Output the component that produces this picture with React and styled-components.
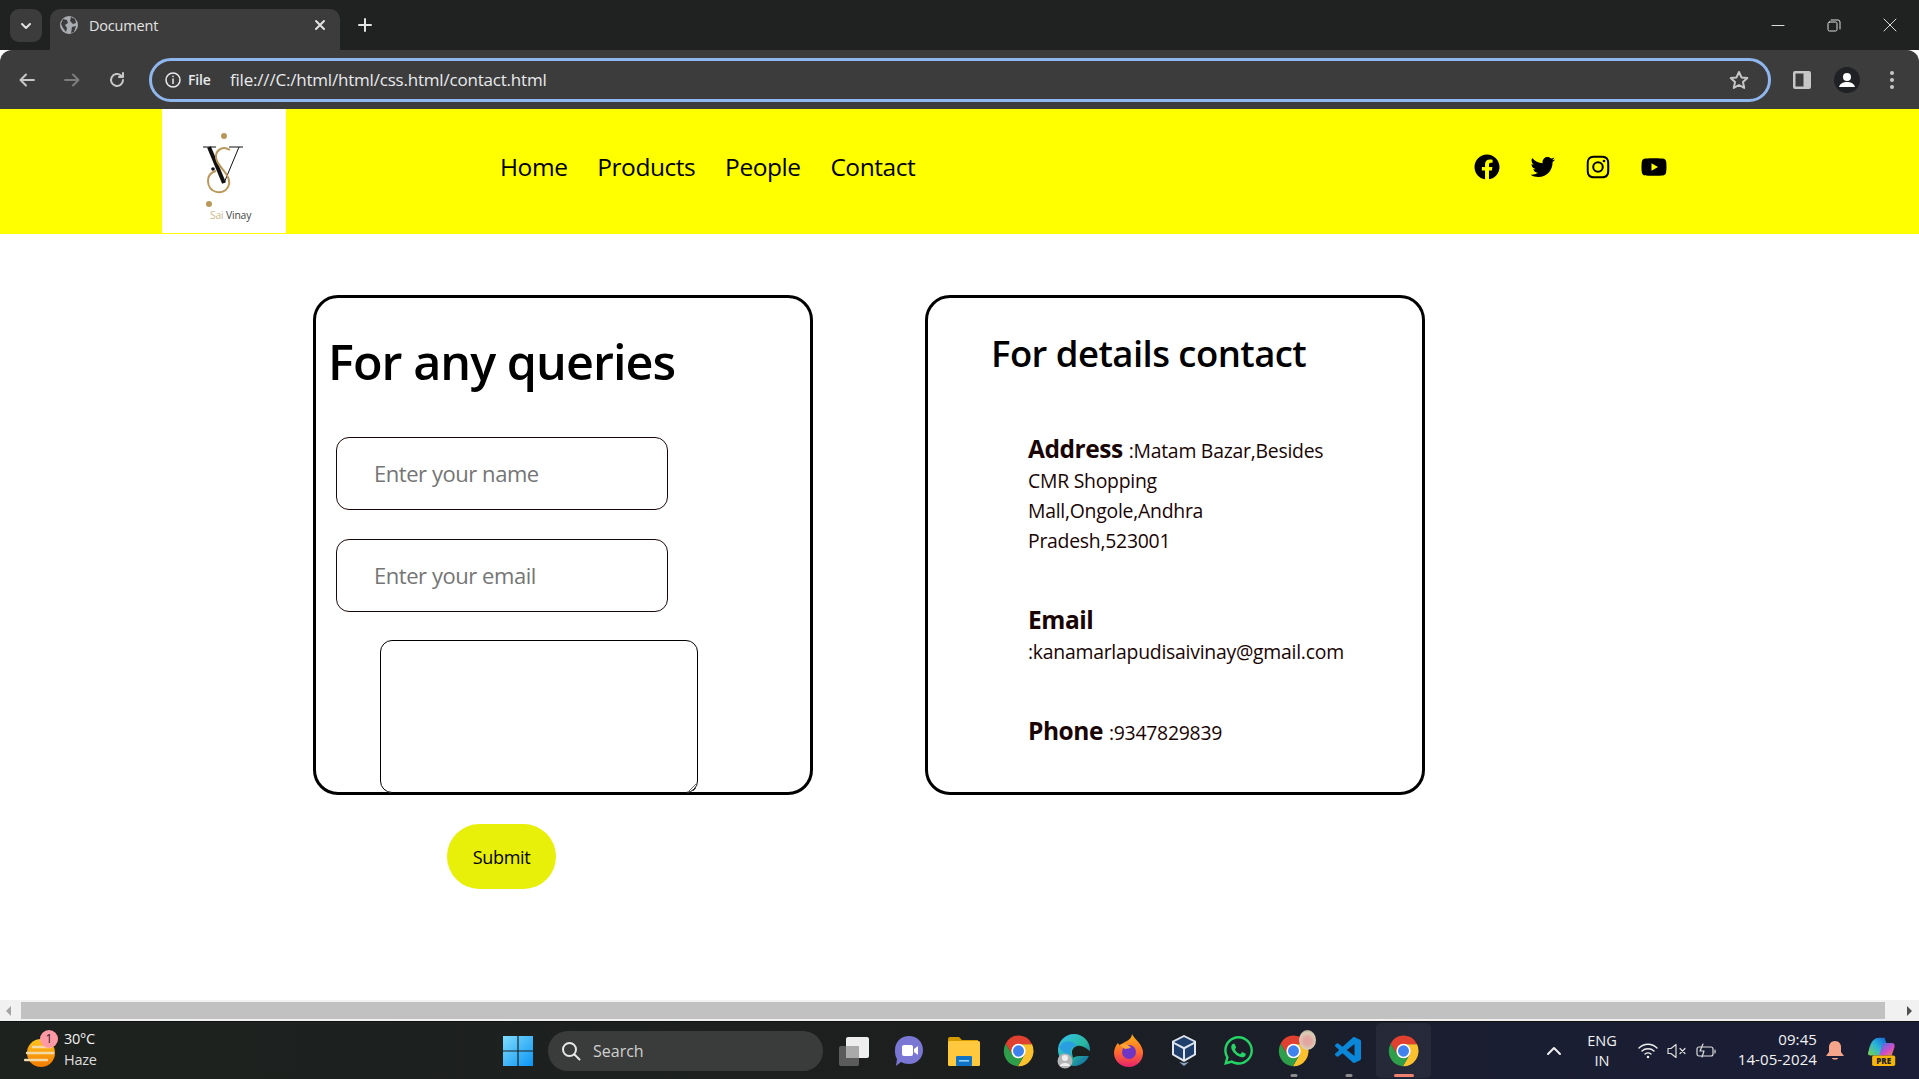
import React from "react";
import styled, { createGlobalStyle } from "styled-components";
import { BiLogoFacebookCircle, BiLogoTwitter, BiLogoInstagram, BiLogoYoutube } from "react-icons/bi";
import { FaWhatsapp } from "react-icons/fa";
import { VscVscode } from "react-icons/vsc";

const Global = createGlobalStyle`
  html, body { margin: 0; padding: 0; background: #fff; overflow: hidden; }
  * { box-sizing: border-box; }
  body { font-family: "Open Sans", "Noto Sans", sans-serif; }
`;
const Screen = styled.div`width: 1919px; height: 1079px; display: flex; flex-direction: column; overflow: hidden;`;

/* browser chrome */
const TabStrip = styled.div`height: 50px; flex: none; background: #202221; display: flex; align-items: flex-end; padding-left: 10px; color: #e3e3e3; font-size: 14.5px;`;
const TabMenu = styled.div`width: 32px; height: 33px; margin: 0 8px 8px 0; border-radius: 9px; background: #3c3c3c; display: flex; align-items: center; justify-content: center;`;
const Tab = styled.div`width: 290px; height: 41px; background: #3c3c3c; border-radius: 10px 10px 0 0; display: flex; align-items: center; padding: 0 13px 9px 10px;`;
const TabTitle = styled.span`flex: 1; margin-left: 11px; letter-spacing: -.2px;`;
const NewTab = styled.div`width: 50px; height: 41px; display: flex; align-items: center; justify-content: center; padding-bottom: 9px;`;
const WinControls = styled.div`margin-left: auto; height: 50px; display: flex; align-items: center; padding: 0 1px 0 0;`;
const WinBtn = styled.div`width: 56px; height: 50px; display: flex; align-items: center; justify-content: center;`;
const Toolbar = styled.div`height: 59px; flex: none; background: #3c3c3c; display: flex; align-items: center; padding-left: 9px; border-radius: 12px 12px 0 0;`;
const NavBtn = styled.div`width: 36px; height: 36px; margin-right: ${p => p.$mr || 9}px; display: flex; align-items: center; justify-content: center;`;
const Omnibox = styled.div`width: 1622px; height: 44px; margin-left: 9px; border: 3px solid #8fb7ee; border-radius: 22px; display: flex; align-items: center; padding: 0 18px 0 12px; color: #e8eaed;`;
const Origin = styled.span`font-size: 14px; font-weight: 600; margin-left: 6px; width: 42px; letter-spacing: -.2px;`;
const Url = styled.span`flex: 1; font-size: 17px; letter-spacing: -.2px;`;
const ToolRight = styled.div`display: flex; align-items: center; margin-left: 13px;`;
const ToolBtn = styled.div`width: 36px; height: 36px; margin-right: ${p => p.$mr ?? 9}px; display: flex; align-items: center; justify-content: center;`;

/* page */
const Page = styled.div`flex: 1; min-height: 0; background: #fff; display: flex; flex-direction: column;`;
const Header = styled.header`height: 125px; flex: none; background: #ff0; display: flex; padding-left: 162px;`;
const Logo = styled.div`width: 124px; height: 124px; background: #fff; display: flex; align-items: center; justify-content: center;`;
const Nav = styled.nav`display: flex; gap: 29.8px; margin-left: 214px; padding-top: 41px;`;
const NavLink = styled.a`font-size: 24.5px; line-height: 34px; color: #000; letter-spacing: -.45px;`;
const Social = styled.div`display: flex; gap: 25.5px; margin-left: 557px; padding-top: 43px; color: #000; font-size: 30px; height: fit-content;`;
const Main = styled.main`display: flex; gap: 112px; padding: 61px 0 0 313px;`;
const Column = styled.div`display: flex; flex-direction: column;`;
const Card = styled.section`width: 500px; height: 500px; border: 3px solid #000; border-radius: 25px; position: relative;`;
const QueryTitle = styled.h1`margin: 29px 0 0 12px; font-size: 48.5px; line-height: 68px; font-weight: 600; letter-spacing: -.95px; color: #000;`;
const Field = styled.input`display: block; width: 332px; height: 73px; margin: ${p => p.$top}px 0 0 20px; padding: 0 0 2px 37px; border: 1px solid #1a0808; border-radius: 13px; background: #fff; font: 22px "Open Sans", sans-serif; letter-spacing: -.45px; outline: 0; &::placeholder { color: #757575; opacity: 1; }`;
const Message = styled.textarea`display: block; width: 318px; height: 153px; margin: 28px 0 0 64px; border: 1px solid #000; border-radius: 12px; background: #fff; outline: 0;`;
const Submit = styled.button`width: 109px; height: 65px; margin: 29px 0 0 134px; border: 0; border-radius: 33px; background: #e8ef08; color: #000; font: 18px "Open Sans", sans-serif; letter-spacing: -.3px;`;
const DetailTitle = styled.h2`margin: 29px 0 0 63px; font-size: 36.5px; line-height: 52px; font-weight: 600; letter-spacing: -.55px; color: #000;`;
const Info = styled.p`margin: ${p => p.$top}px 0 0 100px; font-size: 19.4px; line-height: 30px; color: #1a0505; letter-spacing: -.25px; white-space: nowrap;`;
const Label = styled.b`font-size: 24.5px; line-height: 35px; font-weight: 700; letter-spacing: -.45px; white-space: pre;`;

/* scrollbar */
const Scrollbar = styled.div`height: 21px; flex: none; background: #f1f1f1; display: flex; align-items: flex-start; padding-top: 2px;`;
const ArrowBox = styled.div`width: ${p => p.$w}px; height: 17px; display: flex; align-items: center; padding-left: ${p => p.$pad}px;`;
const Arrow = styled.div`width: 0; height: 0; border-top: 5px solid transparent; border-bottom: 5px solid transparent; ${p => p.$right ? "border-left: 5px solid #505050;" : "border-right: 5px solid #a3a3a3;"}`;
const Thumb = styled.div`width: 1864px; height: 17px; background: #c1c1c1;`;

/* taskbar */
const Taskbar = styled.footer`height: 58px; flex: none; background: linear-gradient(90deg, #1e221f 0%, #1c1f1e 50%, #1a1e33 80%, #1a1d35 100%); color: #f2f2f2; display: flex; align-items: center; position: relative; border-top: 1px solid #111;`;
const Weather = styled.div`width: 490px; display: flex; align-items: center; padding-left: 24px;`;
const WeatherIcon = styled.div`position: relative; width: 36px; height: 42px; margin-right: 4px;`;
const Badge = styled.span`position: absolute; left: 16px; top: 0; width: 18px; height: 18px; border-radius: 50%; background: #ff9aa5; color: #222; font-size: 12px; line-height: 18px; text-align: center;`;
const WeatherText = styled.div`font-size: 14.5px; line-height: 21px; letter-spacing: -.3px; margin-top: -3px;`;
const Dim = styled.div`color: #ddd;`;
const Item = styled.div`position: relative; width: 55px; height: 55px; display: flex; align-items: center; justify-content: center; border-radius: 5px; background: ${p => p.$active ? "rgba(255,255,255,.05)" : "transparent"};`;
const Mark = styled.i`position: absolute; bottom: 1px; left: 50%; transform: translateX(-50%); height: 3px; width: ${p => p.$active ? 20 : 7}px; border-radius: 2px; background: ${p => p.$active ? "#f0806f" : "#8b8b8b"};`;
const Blob = styled.i`position: absolute; right: 5px; top: 7px; width: 17px; height: 20px; border-radius: 50%; background: radial-gradient(circle at 50% 55%, #e3a6a0 0 25%, #d9cdb8 60%, #8c8470 100%);`;
const SearchBox = styled.div`width: 275px; height: 40px; margin: 0 3px; border-radius: 20px; background: #3a3c3c; display: flex; align-items: center; padding-left: 13px; font-size: 16px; color: #d0d0d0; gap: 12px;`;
const Tray = styled.div`position: absolute; right: 0; top: 0; bottom: 0; display: flex; align-items: center;`;
const TrayChevron = styled.div`margin-right: 13px; display: flex;`;
const Lang = styled.div`width: 54px; text-align: center; font-size: 14.5px; line-height: 20px; margin-right: 9px;`;
const TrayIcons = styled.div`display: flex; align-items: center; gap: 9px; margin-right: 11px;`;
const Clock = styled.div`text-align: right; font-size: 15px; line-height: 20px; width: 90px; letter-spacing: .1px; margin-top: -4px;`;
const Bell = styled.div`margin: 0 21px 0 9px; display: flex;`;
const Copilot = styled.div`margin-right: 22px; display: flex;`;

const GlobeIcon = () => (
  <svg width="18" height="18" viewBox="0 0 18 18"><circle cx="9" cy="9" r="9" fill="#a9acb0"/><path d="M3 3l4 1 1 3-3 2 2 3-1 4-3-4-2-4zM11 1l4 2 1 4-3 1-3-3zM12 11l4-1-2 6-3 1z" fill="#3c3c3c"/></svg>
);
const ChromeIcon = () => (
  <svg width="31" height="36" viewBox="0 0 48 54" preserveAspectRatio="none">
    <g transform="translate(0 3)">
      <path d="M24 14H45A23 23 0 0 0 4 13L15 30Z" fill="#e0402f"/>
      <path d="M45 14A23 23 0 0 1 23 47L33 30 33 22 24 14Z" fill="#fbc02d"/>
      <path d="M4 13A23 23 0 0 0 23 47L33 30H15Z" fill="#2f9e4b"/>
      <circle cx="24" cy="24" r="11" fill="#fff"/>
      <circle cx="24" cy="24" r="8.5" fill="#3f82ee"/>
    </g>
  </svg>
);
const logoGold = "#b9975b";
const LogoMark = () => (
  <svg width="124" height="124" viewBox="0 0 124 124">
    <circle cx="62" cy="27" r="3" fill={logoGold}/>
    <path d="M41 38h13M67 38h14" stroke="#111" strokeWidth="1"/>
    <path d="M62 74L77 38" fill="none" stroke="#111" strokeWidth="1"/>
    <path d="M47 38L62 74" stroke="#111" strokeWidth="4"/>
    <path d="M68 41C60 36 51 42 55 52 59 61 71 68 66 78 61 87 46 84 46 72 46 66 50 63 54 62" fill="none" stroke={logoGold} strokeWidth="2"/>
    <circle cx="51" cy="60" r="1.8" fill="#111"/>
    <circle cx="47" cy="95" r="3" fill={logoGold}/>
    <text x="48" y="110" fontFamily="Open Sans, sans-serif" fontSize="10.4" letterSpacing="-.2" fill="#cdb98d">Sai <tspan fill="#444">Vinay</tspan></text>
  </svg>
);

const Windows = () => (
  <svg width="30" height="30" viewBox="0 0 30 30">
    <defs><linearGradient id="w" x1="0" y1="0" x2="1" y2="1"><stop offset="0" stopColor="#7fdcfb"/><stop offset="1" stopColor="#0a94f5"/></linearGradient></defs>
    <path d="M0 0h14.400v14.400H0zM15.600 0H30v14.400H15.600zM0 15.600h14.400V30H0zM15.600 15.600H30V30H15.600z" fill="url(#w)"/>
  </svg>
);
const TaskView = () => (
  <svg width="30" height="30" viewBox="0 0 30 30"><rect x="0" y="10" width="20" height="20" rx="2" fill="#5b5b5b"/><rect x="7" y="1" width="23" height="21" rx="2" fill="#eee"/><rect x="7" y="10" width="13" height="12" fill="#aaa"/></svg>
);
const Meet = () => (
  <svg width="30" height="34" viewBox="0 0 30 34"><path d="M15 2c8 0 14 6 14 14s-6 14-14 14c-3 0-6-1-8-2l-5 4 1-7C1 22 1 19 1 16 1 8 7 2 15 2z" fill="#7a76d4"/><rect x="8" y="11" width="11" height="11" rx="2" fill="#fff"/><path d="M20 15l4-3v9l-4-3z" fill="#fff"/></svg>
);
const Folder = () => (
  <svg width="32" height="30" viewBox="0 0 32 30"><path d="M0 3a2 2 0 0 1 2-2h9l3 3h16v6H0z" fill="#d49a00"/><rect y="5" width="32" height="25" rx="1.5" fill="#ffc83d"/><rect x="8" y="20" width="16" height="10" rx="1" fill="#1173c5"/><rect x="11" y="24" width="10" height="1.6" fill="#8fd0ff"/></svg>
);
const Edge = () => (
  <svg width="34" height="36" viewBox="0 0 34 36">
    <defs><linearGradient id="e" x1="0" y1="0" x2="1" y2="1"><stop offset="0" stopColor="#35c1f1"/><stop offset=".55" stopColor="#2ab8a0"/><stop offset="1" stopColor="#0c59a4"/></linearGradient></defs>
    <circle cx="17" cy="17" r="16" fill="url(#e)"/>
    <path d="M20 13c5-1 9 2 14 6l-1 4H22c-3 0-5 1-6 2l-1-5c0-4 2-6 5-7z" fill="#1b1f1e"/>
    <path d="M2 14c4-7 14-7 18-1-5 0-8 4-6 10-4 0-9-4-12-9z" fill="#2a9fe0"/>
    <circle cx="8" cy="28" r="7.500" fill="#b5b5b5"/><circle cx="8" cy="25" r="3" fill="#eee"/><path d="M3 33c0-4 10-4 10 0z" fill="#eee"/>
  </svg>
);
const Firefox = () => (
  <svg width="30" height="36" viewBox="0 0 30 36">
    <defs><linearGradient id="f" x1="0" y1="0" x2="0" y2="1"><stop offset="0" stopColor="#ffb516"/><stop offset=".55" stopColor="#ff6a2d"/><stop offset="1" stopColor="#e8226d"/></linearGradient></defs>
    <path d="M18 1c2 5 9 8 11 17 1 9-6 16-14 16S0 28 0 20c0-4 2-8 4-10l2 3c2-3 5-4 7-5 3-2 5-4 5-7z" fill="url(#f)"/>
    <circle cx="15" cy="19" r="7" fill="#6f36c6"/><path d="M5 12c4-2 9-1 12 3l-6 1z" fill="#ffa436"/>
  </svg>
);
const VBox = () => (
  <svg width="26" height="34" viewBox="0 0 26 34"><path d="M13 1l12 6v14l-12 7L1 21V7z" fill="#dfe6ef"/><path d="M13 3l10 5-10 5L3 8z" fill="#1f3e6b"/><path d="M3 10l9 5v10l-9-5zM23 10l-9 5v10l9-5z" fill="#1f3e6b"/><path d="M8 28l5 4 5-4-5 1z" fill="#8fa2c0"/></svg>
);
const Copi = () => (
  <svg width="32" height="34" viewBox="0 0 36 36">
    <defs><linearGradient id="c1" x1="0" y1="1" x2="1" y2="0"><stop offset="0" stopColor="#7fd04a"/><stop offset=".5" stopColor="#29b6d8"/><stop offset="1" stopColor="#1560d8"/></linearGradient><linearGradient id="c2" x1="0" y1="0" x2="1" y2="1"><stop offset="0" stopColor="#2f7ae8"/><stop offset=".6" stopColor="#d44bc8"/><stop offset="1" stopColor="#f09040"/></linearGradient></defs>
    <path d="M4 18C6 8 10 3 16 3h6l2 6-6 14H6C3 23 3 21 4 18z" fill="url(#c1)"/>
    <path d="M20 9h10c3 0 4 2 3 5l-3 9h-14z" fill="url(#c2)"/>
    <rect x="8" y="23" width="26" height="12" rx="2" fill="#f5b50a"/>
    <text x="21" y="32.500" textAnchor="middle" fontFamily="Open Sans, sans-serif" fontSize="9" fontWeight="800" fill="#222">PRE</text>
  </svg>
);
const Line = ({ w = 18, h = 18, children, c = "#dcdcdc", sw = 2 }) => (
  <svg width={w} height={h} viewBox={`0 0 ${w} ${h}`} fill="none" stroke={c} strokeWidth={sw} strokeLinecap="round" strokeLinejoin="round">{children}</svg>
);

export default function App() {
  return (
    <Screen>
      <Global />
      <TabStrip>
        <TabMenu><Line w={14} h={14} c="#e3e3e3"><path d="M3 5l4 4 4-4"/></Line></TabMenu>
        <Tab>
          <GlobeIcon />
          <TabTitle>Document</TabTitle>
          <Line w={14} h={14} c="#e3e3e3"><path d="M3 3l8 8M11 3l-8 8"/></Line>
        </Tab>
        <NewTab><Line w={16} h={16} c="#e3e3e3"><path d="M8 2v12M2 8h12"/></Line></NewTab>
        <WinControls>
          <WinBtn><Line w={14} h={14} sw={1}><path d="M1 7.500h12"/></Line></WinBtn>
          <WinBtn><Line w={14} h={14} sw={1}><rect x="1" y="4" width="9" height="9" rx="1.500"/><path d="M4 2h7a2 2 0 0 1 2 2v7"/></Line></WinBtn>
          <WinBtn><Line w={14} h={14} sw={1}><path d="M1 1l12 12M13 1L1 13"/></Line></WinBtn>
        </WinControls>
      </TabStrip>
      <Toolbar>
        <NavBtn><Line w={18} h={18} c="#c8c8c8"><path d="M16 9H3M8 3.500L2.500 9 8 14.500"/></Line></NavBtn>
        <NavBtn><Line w={18} h={18} c="#7d7d7d"><path d="M2 9h13M10 3.500L15.500 9 10 14.500"/></Line></NavBtn>
        <NavBtn $mr={5}><Line w={18} h={18} c="#c8c8c8"><path d="M15 9a6 6 0 1 1-2-4.500L15 6M15 2v4h-4"/></Line></NavBtn>
        <Omnibox>
          <Line w={18} h={18} c="#e8eaed" sw={1.5}><circle cx="9" cy="9" r="7"/><path d="M9 8v4.500M9 5.200v.3"/></Line>
          <Origin>File</Origin>
          <Url>file:///C:/html/html/css.html/contact.html</Url>
          <Line w={22} h={22} c="#c7c7c7"><path d="M11 3l2.500 5.400 5.800.7-4.300 4 1.200 5.800-5.200-2.900-5.200 2.900 1.200-5.800-4.300-4 5.800-.7z"/></Line>
        </Omnibox>
        <ToolRight>
          <ToolBtn><svg width="18" height="18" viewBox="0 0 18 18"><rect width="18" height="18" rx="2" fill="#c7c7c7"/><rect x="2.500" y="2.500" width="8" height="13" fill="#3c3c3c"/></svg></ToolBtn>
          <ToolBtn><svg width="26" height="26" viewBox="0 0 26 26"><circle cx="13" cy="13" r="13" fill="#202124"/><circle cx="13" cy="10" r="4" fill="#fff"/><path d="M5 20c1-4 5-5 8-5s7 1 8 5z" fill="#fff"/></svg></ToolBtn>
          <ToolBtn $mr={0}><svg width="4" height="18" viewBox="0 0 4 18"><circle cx="2" cy="2" r="2" fill="#c7c7c7"/><circle cx="2" cy="9" r="2" fill="#c7c7c7"/><circle cx="2" cy="16" r="2" fill="#c7c7c7"/></svg></ToolBtn>
        </ToolRight>
      </Toolbar>

      <Page>
        <Header>
          <Logo><LogoMark /></Logo>
          <Nav>
            <NavLink>Home</NavLink>
            <NavLink>Products</NavLink>
            <NavLink>People</NavLink>
            <NavLink>Contact</NavLink>
          </Nav>
          <Social>
            <BiLogoFacebookCircle />
            <BiLogoTwitter />
            <BiLogoInstagram />
            <BiLogoYoutube />
          </Social>
        </Header>
        <Main>
          <Column>
            <Card>
              <QueryTitle>For any queries</QueryTitle>
              <Field $top={42} placeholder="Enter your name" />
              <Field $top={29} placeholder="Enter your email" />
              <Message />
            </Card>
            <Submit>Submit</Submit>
          </Column>
          <Card>
            <DetailTitle>For details contact</DetailTitle>
            <Info $top={52}><Label>Address </Label>:Matam Bazar,Besides<br />CMR Shopping<br />Mall,Ongole,Andhra<br />Pradesh,523001</Info>
            <Info $top={46}><Label>Email</Label><br />:kanamarlapudisaivinay@gmail.com</Info>
            <Info $top={46}><Label>Phone </Label>:9347829839</Info>
          </Card>
        </Main>
      </Page>

      <Scrollbar>
        <ArrowBox $w={21} $pad={6}><Arrow /></ArrowBox>
        <Thumb />
        <ArrowBox $w={34} $pad={22}><Arrow $right /></ArrowBox>
      </Scrollbar>

      <Taskbar>
        <Weather>
          <WeatherIcon>
            <svg width="34" height="40" viewBox="0 0 34 40" style={{ marginTop: 6 }}>
              <defs><linearGradient id="s" x1="0" y1="0" x2="0" y2="1"><stop offset="0" stopColor="#ffc51e"/><stop offset="1" stopColor="#f27a00"/></linearGradient></defs>
              <circle cx="17" cy="17" r="14" fill="url(#s)"/>
              <path d="M9 11h18M3 17h26M1 24h22" stroke="#f4d9a8" strokeWidth="2.400" strokeLinecap="round"/>
            </svg>
            <Badge>1</Badge>
          </WeatherIcon>
          <WeatherText>30°C<Dim>Haze</Dim></WeatherText>
        </Weather>
        <Item><Windows /></Item>
        <SearchBox>
          <Line w={20} h={20} c="#e8e8e8" sw={2}><circle cx="8.500" cy="8.500" r="6.500"/><path d="M13.500 13.500l5 5"/></Line>
          Search
        </SearchBox>
        <Item><TaskView /></Item>
        <Item><Meet /></Item>
        <Item><Folder /></Item>
        <Item><ChromeIcon /></Item>
        <Item><Edge /></Item>
        <Item><Firefox /></Item>
        <Item><VBox /></Item>
        <Item><FaWhatsapp size={33} color="#25d366" /></Item>
        <Item><ChromeIcon /><Blob /><Mark /></Item>
        <Item><VscVscode size={32} color="#0a87d8" /><Mark /></Item>
        <Item $active><ChromeIcon /><Mark $active /></Item>
        <Tray>
          <TrayChevron><Line w={16} h={10} c="#eee"><path d="M2 8l6-6 6 6"/></Line></TrayChevron>
          <Lang>ENG<br />IN</Lang>
          <TrayIcons>
            <Line w={20} h={16} c="#eee" sw={1.4}><path d="M1 5c5-5 13-5 18 0M4 8c3-3 9-3 12 0M7 11c2-1.500 4-1.500 6 0"/><circle cx="10" cy="14" r=".6"/></Line>
            <Line w={20} h={16} c="#ddd" sw={1.2}><path d="M1 5.500h3l5-4v13l-5-4H1zM13 5.500l5 5M18 5.500l-5 5"/></Line>
            <Line w={20} h={16} c="#ddd" sw={1.2}><rect x="1" y="4" width="16" height="9" rx="2"/><path d="M19 7v3M7 1L4 8h4l-2 6"/></Line>
          </TrayIcons>
          <Clock>09:45<br />14-05-2024</Clock>
          <Bell><svg width="18" height="20" viewBox="0 0 18 20"><path d="M9 0c4 0 6 3 6 6v5l3 4H0l3-4V6c0-3 2-6 6-6z" fill="#f5a58a"/><path d="M6 17h6c0 2-6 2-6 0z" fill="#f5a58a"/></svg></Bell>
          <Copilot><Copi /></Copilot>
        </Tray>
      </Taskbar>
    </Screen>
  );
}
